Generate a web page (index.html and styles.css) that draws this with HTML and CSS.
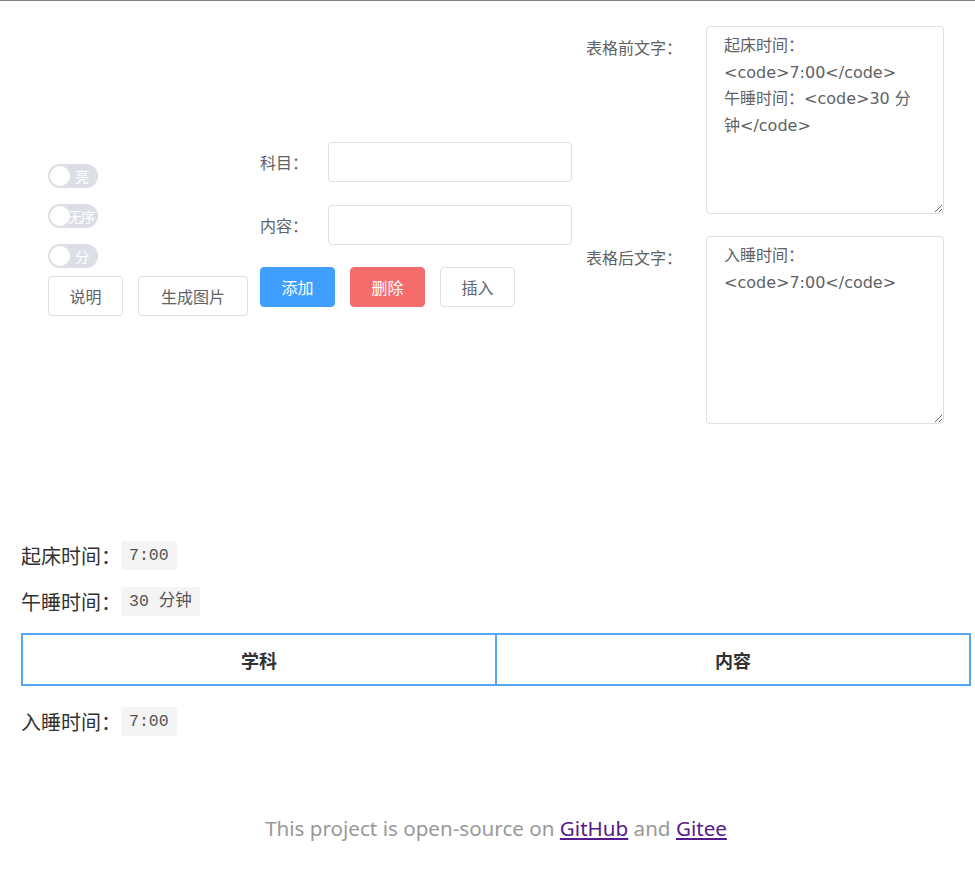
FILE: index.html
```html
<!DOCTYPE html>
<html lang="zh-CN">
<head>
<meta charset="utf-8">
<title>课程表</title>
<link rel="stylesheet" href="styles.css">
</head>
<body>
<div class="page">
  <section class="editor">
    <div class="col-left">
      <div class="switch"><span class="knob"></span><span class="sw-text">亮</span></div>
      <div class="switch"><span class="knob"></span><span class="sw-text sw-wide">无序</span></div>
      <div class="switch"><span class="knob"></span><span class="sw-text">分</span></div>
      <div class="btn-row">
        <button class="btn">说明</button>
        <button class="btn btn-wide">生成图片</button>
      </div>
    </div>
    <div class="col-mid">
      <div class="form-row"><label class="lbl">科目：</label><input class="inp" type="text"></div>
      <div class="form-row"><label class="lbl">内容：</label><input class="inp" type="text"></div>
      <div class="btn-row">
        <button class="btn btn-primary">添加</button>
        <button class="btn btn-danger">删除</button>
        <button class="btn">插入</button>
      </div>
    </div>
    <div class="col-right">
      <div class="ta-row"><label class="lbl-wide">表格前文字：</label><textarea class="ta">起床时间：<code>7:00</code>
午睡时间：<code>30 分钟</code></textarea></div>
      <div class="ta-row"><label class="lbl-wide">表格后文字：</label><textarea class="ta">入睡时间：<code>7:00</code></textarea></div>
    </div>
  </section>

  <section class="preview">
    <p class="line">起床时间：<code class="code">7:00</code></p>
    <p class="line">午睡时间：<code class="code">30 分钟</code></p>
    <table class="tbl">
      <thead><tr><th>学科</th><th>内容</th></tr></thead>
    </table>
    <p class="line">入睡时间：<code class="code">7:00</code></p>
  </section>

  <footer class="footer">This project is open-source on <a href="#gh" class="lnk">GitHub</a> and <a href="#gt" class="lnk">Gitee</a></footer>
</div>
</body>
</html>
```
FILE: styles.css
```css
html, body {
  margin: 0;
  padding: 0;
  background: #fff;
}
body {
  border-top: 1px solid #808080;
  font-family: "Noto Sans CJK SC", "Noto Sans", sans-serif;
  color: #606266;
}
.page {
  padding: 0 4px 0 21px;
}
.editor {
  display: flex;
  align-items: center;
  padding-top: 25px;
  height: 398px;
}
.col-left {
  width: 200px;
  margin-left: 27px;
  margin-right: 12px;
  padding-top: 30px;
  display: flex;
  flex-direction: column;
  align-items: flex-start;
}
.switch {
  position: relative;
  width: 50px;
  height: 24px;
  border-radius: 12px;
  background: #dcdfe6;
  margin-bottom: 16px;
  box-sizing: border-box;
}
.switch:nth-child(3) { margin-bottom: 8px; }
.knob {
  position: absolute;
  left: 2px;
  top: 2px;
  width: 20px;
  height: 20px;
  border-radius: 50%;
  background: #fff;
}
.sw-text {
  position: absolute;
  left: 27px;
  top: 0;
  line-height: 24px;
  font-size: 14px;
  color: #fff;
}
.sw-wide {
  left: 20px;
  letter-spacing: -1px;
  width: 29px;
  overflow: hidden;
  white-space: nowrap;
}
.btn-row {
  display: flex;
  gap: 15px;
}
.btn {
  width: 75px;
  height: 40px;
  padding: 0;
  border: 1px solid #dcdfe6;
  border-radius: 4px;
  background: #fff;
  color: #606266;
  font-family: inherit;
  font-size: 16px;
  line-height: 38px;
  box-sizing: border-box;
}
.btn-wide {
  width: 110px;
}
.btn-primary {
  background: #409eff;
  border-color: #409eff;
  color: #fff;
}
.btn-danger {
  background: #f56c6c;
  border-color: #f56c6c;
  color: #fff;
}
.col-mid {
  width: 312px;
  margin-right: 14px;
  padding-bottom: 1px;
  display: flex;
  flex-direction: column;
}
.form-row {
  display: flex;
  align-items: center;
  margin-bottom: 23px;
}
.form-row:nth-child(2) { margin-bottom: 22px; }
.lbl {
  width: 68px;
  font-size: 16px;
  line-height: 40px;
}
.inp {
  width: 245px;
  height: 40px;
  box-sizing: border-box;
  border: 1px solid #dcdfe6;
  border-radius: 4px;
  padding: 0 12px;
  font-family: inherit;
  font-size: 16px;
  outline: none;
}
.col-right {
  display: flex;
  flex-direction: column;
  gap: 22px;
}
.ta-row {
  display: flex;
  align-items: flex-start;
}
.lbl-wide {
  width: 120px;
  font-size: 16px;
  line-height: 42px;
}
.ta {
  width: 238px;
  height: 188px;
  box-sizing: border-box;
  border: 1px solid #dcdfe6;
  border-radius: 4px;
  padding: 6px 20px 5px 17px;
  font-family: "DejaVu Sans", "Noto Sans CJK SC", sans-serif;
  font-size: 16px;
  line-height: 26.5px;
  color: #606266;
  resize: vertical;
  outline: none;
}
.preview {
  padding-top: 108px;
}
.line {
  margin: 0;
  height: 46px;
  display: flex;
  align-items: center;
  font-size: 20px;
  color: #303133;
}
.code {
  display: inline-block;
  background: #f4f4f5;
  border-radius: 3px;
  padding: 5px 8px;
  font-family: "Liberation Mono", "Noto Sans CJK SC", monospace;
  font-size: 16.5px;
  line-height: 19px;
  color: #555;
}
.tbl {
  width: 100%;
  border-collapse: collapse;
  margin: 9px 0 12px;
}
.tbl th {
  width: 50%;
  height: 49px;
  border: 2px solid #55a6f7;
  font-size: 18px;
  font-weight: bold;
  color: #303133;
  text-align: center;
  padding: 0;
}
.footer {
  margin-top: 70px;
  text-align: center;
  font-family: "Noto Sans", sans-serif;
  font-size: 20.6px;
  color: #999;
}
.lnk {
  color: #551a8b;
}
```
